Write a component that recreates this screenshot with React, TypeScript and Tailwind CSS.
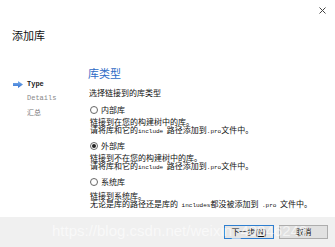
export default function App() {
  return (
    <div className="relative w-[335px] h-[247px] bg-white flex flex-col overflow-hidden font-['Noto_Sans_CJK_SC','Noto_Sans',sans-serif] text-[#111]">
      <div className="h-[20px] flex justify-end items-center pr-[9px]">
        <svg width="7" height="7" viewBox="0 0 7 7">
          <path d="M0.5 0.5 L6.5 6.5 M6.5 0.5 L0.5 6.5" stroke="#444" strokeWidth="1" />
        </svg>
      </div>
      <div className="mt-[8px] h-[14px] pl-[12px] text-[11px] leading-[14px]">添加库</div>
      <div className="mt-[24px] flex flex-1">
        <div className="w-[88px] pt-[11px] pl-[13px] flex flex-col font-['Liberation_Mono',monospace] text-[7px]">
          <div className="h-[14px] flex items-center">
            <svg width="10" height="7" viewBox="0 0 10 7">
              <defs>
                <linearGradient id="ag" x1="0" y1="0" x2="0" y2="1">
                  <stop offset="0" stopColor="#7fb2ee" />
                  <stop offset="1" stopColor="#2f6fd0" />
                </linearGradient>
              </defs>
              <polygon points="0,2 5,2 5,0 10,3.5 5,7 5,5 0,5" fill="url(#ag)" />
            </svg>
            <span className="ml-[4px] text-[#222] font-bold">Type</span>
          </div>
          <div className="h-[14px] flex items-center pl-[14px] text-[#888]">Details</div>
          <div className="h-[14px] flex items-center pl-[14px] text-[#777] font-['Noto_Sans_CJK_SC',sans-serif] text-[7px]">汇总</div>
        </div>
        <div className="flex flex-col pl-[1px] text-[8px] leading-[8px]">
          <div className="-ml-[1px] h-[14px] text-[11px] leading-[14px] text-[#2e6bc6]">库类型</div>
          <div className="mt-[9px] h-[8px]">选择链接到的库类型</div>
          <Radio label="内部库" className="mt-[8px]" />
          <div className="mt-[3px] pl-[1px]">
            <div className="h-[8px]">链接到在您的构建树中的库。</div>
            <div className="h-[8px]">
              请将库和它的<span className="font-['Liberation_Mono',monospace] text-[6px]">include </span>路径添加到<span className="font-['Liberation_Mono',monospace] text-[6px]">.pro</span>文件中。
            </div>
          </div>
          <Radio label="外部库" checked className="mt-[7px]" />
          <div className="mt-[3px] pl-[1px]">
            <div className="h-[8px]">链接到不在您的构建树中的库。</div>
            <div className="h-[8px]">
              请将库和它的<span className="font-['Liberation_Mono',monospace] text-[6px]">include </span>路径添加到<span className="font-['Liberation_Mono',monospace] text-[6px]">.pro</span>文件中。
            </div>
          </div>
          <Radio label="系统库" className="mt-[7px]" />
          <div className="mt-[5px] pl-[1px]">
            <div className="h-[8px]">链接到系统库。</div>
            <div className="h-[8px] whitespace-nowrap">
              无论是库的路径还是库的<span className="font-['Liberation_Mono',monospace] text-[6px]"> includes</span>都没被添加到<span className="font-['Liberation_Mono',monospace] text-[6px]"> .pro </span>文件中。
            </div>
          </div>
        </div>
      </div>
      <div className="h-[30px] bg-[#f0f0f0] flex justify-end items-center gap-[5px] pr-[7px] text-[8px]">
        <button className="w-[50px] h-[14px] border border-[#2f7fd0] bg-[#e5e5e5] flex items-center justify-center leading-[8px] text-[#111]">
          下一步(<span className="underline">N</span>)
        </button>
        <button className="w-[49px] h-[14px] border border-[#adadad] bg-[#e1e1e1] flex items-center justify-center leading-[8px] text-[#111]">
          取消
        </button>
      </div>
      <div className="absolute left-[52px] top-[222px] pointer-events-none whitespace-nowrap font-['Liberation_Sans',Arial,sans-serif] text-[15px] leading-[18px] text-white opacity-60">
        https://blog.csdn.net/weixin_40946248
      </div>
    </div>
  );
}

function Radio({ label, checked, className }: { label: string; checked?: boolean; className?: string }) {
  return (
    <div className={"h-[10px] flex items-center " + (className ?? "")}>
      <span className="ml-[1px] w-[8px] h-[8px] rounded-full border border-[#666] bg-white flex items-center justify-center">
        {checked ? <span className="w-[4px] h-[4px] rounded-full bg-[#222]" /> : null}
      </span>
      <span className="ml-[3px]">{label}</span>
    </div>
  );
}
